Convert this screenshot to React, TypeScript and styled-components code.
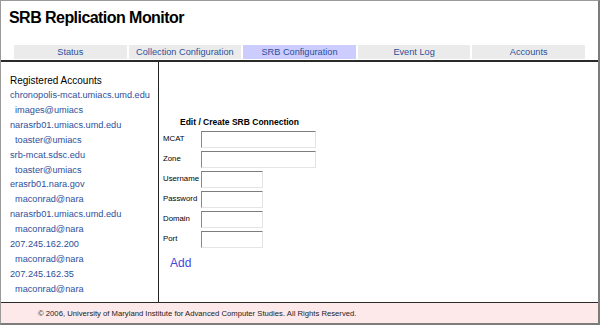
import { FC, Fragment } from "react";
import styled, { createGlobalStyle } from "styled-components";

const GlobalStyle = createGlobalStyle`
  html, body {
    margin: 0;
    padding: 0;
    background: #ffffff;
  }
  * {
    box-sizing: border-box;
  }
`;

const Frame = styled.div`
  width: 600px;
  height: 325px;
  display: flex;
  flex-direction: column;
  border-top: 1px solid #9a9a9a;
  border-left: 1px solid #9a9a9a;
  border-right: 2px solid #7c7c7c;
  border-bottom: 2px solid #7c7c7c;
  font-family: "Liberation Sans", Arial, sans-serif;
  color: #000;
`;

const Header = styled.div`
  padding: 7px 0 0 8px;
  height: 59px;
  display: flex;
  flex-direction: column;
`;

const Title = styled.h1`
  margin: 0;
  font-size: 16px;
  line-height: 20px;
  font-weight: bold;
  letter-spacing: -0.55px;
`;

const TabBar = styled.nav`
  margin-top: 17px;
  padding-left: 5px;
  display: flex;
  gap: 2px;
`;

const Tab = styled.div<{ $active?: boolean }>`
  width: 112.6px;
  height: 14px;
  display: flex;
  align-items: center;
  justify-content: center;
  background: ${(p) => (p.$active ? "#ccccff" : "#ebebeb")};
  color: #2d4f9a;
  font-size: 9.2px;
`;

const Rule = styled.div`
  height: 2px;
  background: #2a2a2a;
`;

const Main = styled.div`
  flex: 1;
  display: flex;
`;

const Sidebar = styled.aside`
  width: 158px;
  border-right: 1px solid #222;
  padding: 12px 0 0 9px;
`;

const SidebarTitle = styled.div`
  font-size: 10px;
  line-height: 14px;
`;

const AccountLink = styled.div<{ $indent?: boolean }>`
  font-size: 9.2px;
  line-height: 14.9px;
  color: #2d4f9c;
  padding-left: ${(p) => (p.$indent ? "5px" : "0")};
  white-space: nowrap;
`;

const Content = styled.section`
  flex: 1;
  padding: 55px 0 0 4px;
`;

const Form = styled.div`
  width: 153px;
  display: grid;
  grid-template-columns: 38px auto;
  row-gap: 3px;
  align-items: center;
`;

const FormHeading = styled.div`
  grid-column: 1 / 3;
  text-align: center;
  font-size: 8.5px;
  line-height: 10px;
  font-weight: bold;
  margin-bottom: 0.5px;
`;

const Label = styled.label`
  font-size: 7.8px;
  line-height: 10px;
`;

const Field = styled.div<{ $wide?: boolean }>`
  width: ${(p) => (p.$wide ? "115px" : "62px")};
  height: 17px;
  background: #fff;
  border-top: 1px solid #7d7d7d;
  border-left: 1px solid #8a8a8a;
  border-right: 1px solid #e4e4e4;
  border-bottom: 1px solid #e4e4e4;
`;

const AddLink = styled.div`
  margin: 8.5px 0 0 7px;
  font-size: 12px;
  line-height: 14px;
  color: #4646de;
`;

const Footer = styled.footer`
  height: 21px;
  border-top: 1px solid #2a2a2a;
  background: #fde9e9;
  padding-left: 37px;
  padding-top: 1px;
  font-size: 7.7px;
  line-height: 19px;
  color: #222;
  white-space: nowrap;
`;

const tabs = [
  "Status",
  "Collection Configuration",
  "SRB Configuration",
  "Event Log",
  "Accounts",
];

const accounts: Array<[string, string]> = [
  ["chronopolis-mcat.umiacs.umd.edu", "images@umiacs"],
  ["narasrb01.umiacs.umd.edu", "toaster@umiacs"],
  ["srb-mcat.sdsc.edu", "toaster@umiacs"],
  ["erasrb01.nara.gov", "maconrad@nara"],
  ["narasrb01.umiacs.umd.edu", "maconrad@nara"],
  ["207.245.162.200", "maconrad@nara"],
  ["207.245.162.35", "maconrad@nara"],
];

const fields: Array<[string, boolean]> = [
  ["MCAT", true],
  ["Zone", true],
  ["Username", false],
  ["Password", false],
  ["Domain", false],
  ["Port", false],
];

const App: FC = () => {
  return (
    <>
      <GlobalStyle />
      <Frame>
        <Header>
          <Title>SRB Replication Monitor</Title>
          <TabBar>
            {tabs.map((t) => (
              <Tab key={t} $active={t === "SRB Configuration"}>
                {t}
              </Tab>
            ))}
          </TabBar>
        </Header>
        <Rule />
        <Main>
          <Sidebar>
            <SidebarTitle>Registered Accounts</SidebarTitle>
            {accounts.map(([host, user], i) => (
              <div key={i}>
                <AccountLink>{host}</AccountLink>
                <AccountLink $indent>{user}</AccountLink>
              </div>
            ))}
          </Sidebar>
          <Content>
            <Form>
              <FormHeading>Edit / Create SRB Connection</FormHeading>
              {fields.map(([name, wide]) => (
                <Fragment key={name}>
                  <Label>{name}</Label>
                  <Field $wide={wide} />
                </Fragment>
              ))}
            </Form>
            <AddLink>Add</AddLink>
          </Content>
        </Main>
        <Footer>
          © 2006, University of Maryland Institute for Advanced Computer
          Studies. All Rights Reserved.
        </Footer>
      </Frame>
    </>
  );
};

export default App;
